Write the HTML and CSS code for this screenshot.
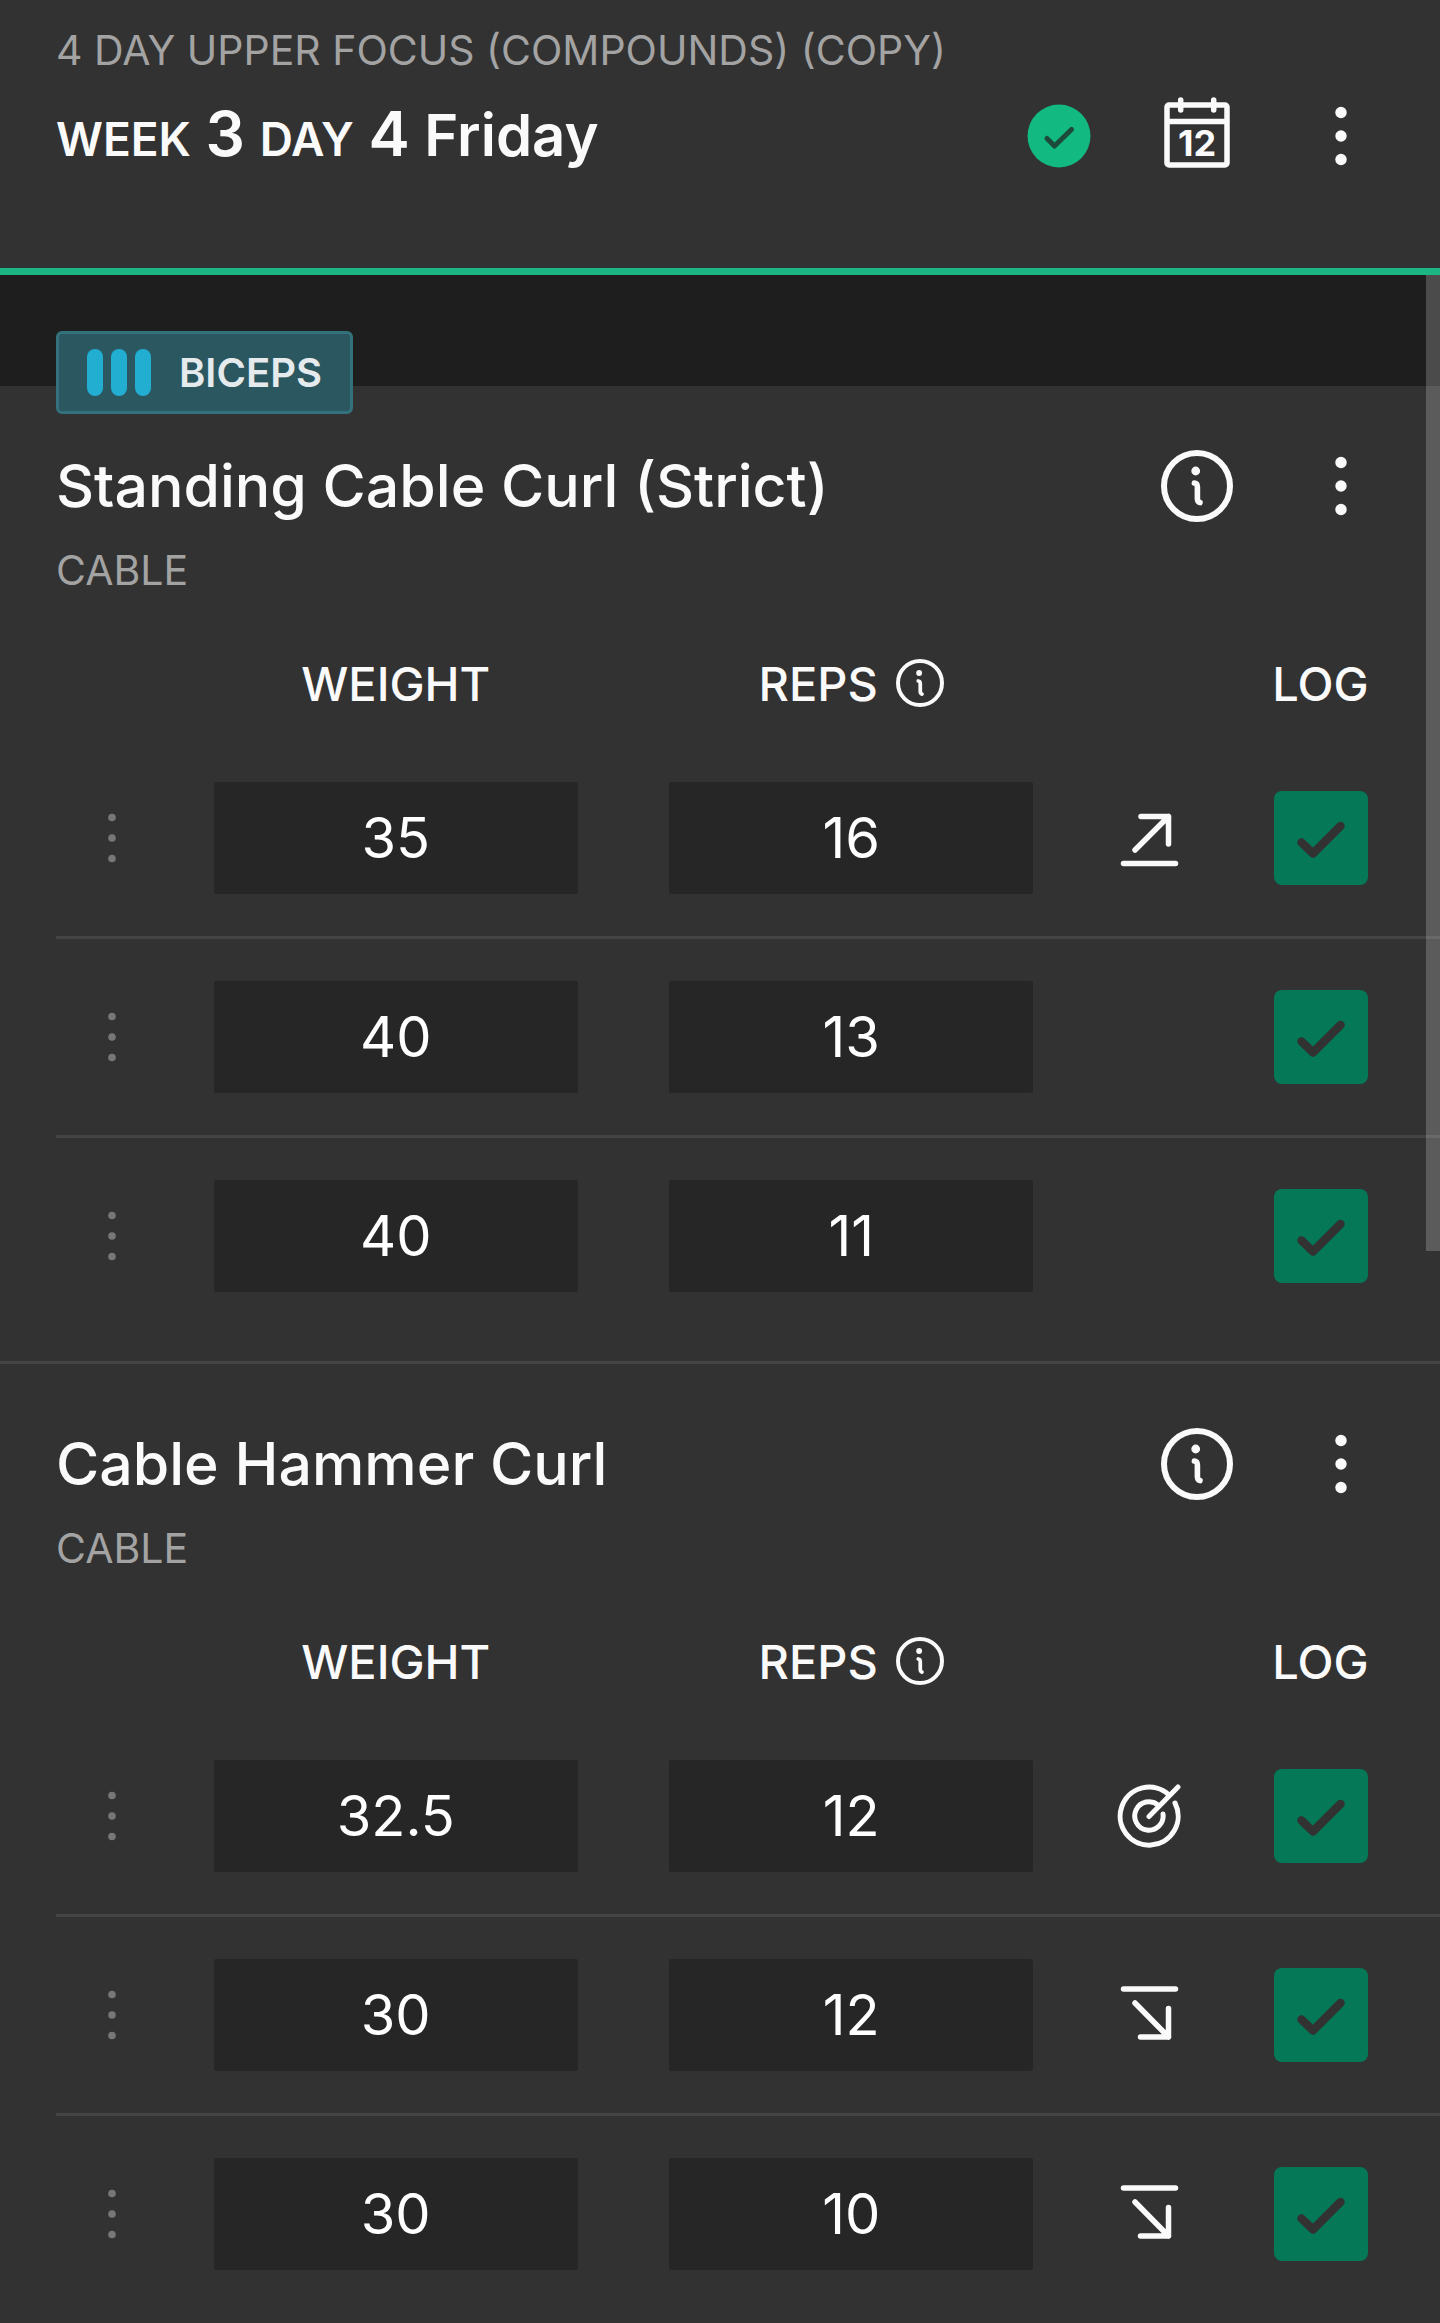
FILE: index.html
```html
<!DOCTYPE html>
<html lang="en">
<head>
  <meta charset="UTF-8">
  <title>Workout - Week 3 Day 4</title>
  <meta name="viewport" content="width=device-width, initial-scale=1.0">
  <link rel="stylesheet" href="styles.css">
</head>
<body>

  <!-- Icons -->
  <svg class="sprite" aria-hidden="true">
    <symbol id="info" viewBox="0 0 72 72">
      <circle cx="36" cy="36" r="33" fill="none" stroke="currentColor" stroke-width="6"/>
      <circle cx="34.7" cy="21" r="4.4" fill="currentColor"/>
      <path d="M33.4 33Q36.4 33.4 36.4 37V48.5Q36.4 52 39 52.6" fill="none" stroke="currentColor" stroke-width="5.6" stroke-linecap="round"/>
    </symbol>
    <symbol id="more" viewBox="0 0 72 72">
      <circle cx="36" cy="12.5" r="5.7" fill="currentColor"/>
      <circle cx="36" cy="36" r="5.7" fill="currentColor"/>
      <circle cx="36" cy="59.5" r="5.7" fill="currentColor"/>
    </symbol>
    <symbol id="grip" viewBox="0 0 64 64">
      <circle cx="32" cy="11.5" r="3.8" fill="currentColor"/>
      <circle cx="32" cy="32" r="3.8" fill="currentColor"/>
      <circle cx="32" cy="52.5" r="3.8" fill="currentColor"/>
    </symbol>
    <symbol id="tick" viewBox="0 0 94 94">
      <path d="M27.5 51.5L39 62.5L66.5 35" fill="none" stroke="currentColor" stroke-width="8.5" stroke-linecap="round" stroke-linejoin="round"/>
    </symbol>
    <symbol id="up" viewBox="0 0 64 64">
      <path d="M24 10.5H51.5V38M51.5 10.5L18 44M6.5 57.500H58.5" fill="none" stroke="currentColor" stroke-width="5.5" stroke-linecap="round" stroke-linejoin="round"/>
    </symbol>
    <symbol id="down" viewBox="0 0 64 64">
      <path d="M23.5 54H51.5V25.5M51.5 54L18 20M6.5 6H58.5" fill="none" stroke="currentColor" stroke-width="5.5" stroke-linecap="round" stroke-linejoin="round"/>
    </symbol>
    <symbol id="target" viewBox="0 0 64 64">
      <path d="M58 19A29 29 0 1 1 52 11M46 30A14.2 14.2 0 1 1 41.5 21.5M32 32.5L61 3" fill="none" stroke="currentColor" stroke-width="5" stroke-linecap="round"/>
    </symbol>
  </svg>

  <header class="header">
    <p class="plan">4 DAY UPPER FOCUS (COMPOUNDS) (COPY)</p>
    <div class="title-row">
      <h1><span class="word">WEEK</span> <span class="num">3</span> <span class="word">DAY</span> <span class="num">4</span> Friday</h1>
      <svg class="done" viewBox="0 0 64 64" role="img" aria-label="Completed">
        <circle cx="32" cy="32" r="31.5" fill="#12b981"/>
        <path d="M20 34.5L27.5 42L44.5 25.5" fill="none" stroke="#1c4a3b" stroke-width="5" stroke-linecap="round" stroke-linejoin="round"/>
      </svg>
      <button class="icon-btn" aria-label="Calendar">
        <svg viewBox="0 0 72 72">
          <rect x="6" y="5" width="60" height="60" rx="2" fill="none" stroke="currentColor" stroke-width="5.5"/>
          <path d="M6 21.5H66" stroke="currentColor" stroke-width="5.5"/>
          <path d="M19.7 0V10M52.700 0V10" stroke="currentColor" stroke-width="5.5" stroke-linecap="round"/>
          <text x="36" y="56" class="cal-day">12</text>
        </svg>
      </button>
      <button class="icon-btn" aria-label="Workout menu"><svg><use href="#more"/></svg></button>
    </div>
  </header>

  <main class="content">

    <section class="exercise">
      <div class="badge"><span class="bars"><i></i><i></i><i></i></span>BICEPS</div>
      <div class="title-row">
        <h2>Standing Cable Curl (Strict)</h2>
        <button class="icon-btn" aria-label="Exercise info"><svg><use href="#info"/></svg></button>
        <button class="icon-btn" aria-label="Exercise menu"><svg><use href="#more"/></svg></button>
      </div>
      <p class="equipment">CABLE</p>
      <table class="sets">
        <thead>
          <tr>
            <th class="col-grip"></th>
            <th>WEIGHT</th>
            <th><span class="reps">REPS <button class="help" aria-label="About reps"><svg><use href="#info"/></svg></button></span></th>
            <th class="col-trend"></th>
            <th class="col-log">LOG</th>
          </tr>
        </thead>
        <tbody>
          <tr>
            <td><button class="grip" aria-label="Set menu"><svg><use href="#grip"/></svg></button></td>
            <td><input class="value" type="text" aria-label="Weight" value="35"></td>
            <td><input class="value" type="text" aria-label="Reps" value="16"></td>
            <td><svg class="trend"><use href="#up"/></svg></td>
            <td class="col-log"><label class="log"><input type="checkbox" aria-label="Log set" checked><svg><use href="#tick"/></svg></label></td>
          </tr>
          <tr>
            <td><button class="grip" aria-label="Set menu"><svg><use href="#grip"/></svg></button></td>
            <td><input class="value" type="text" aria-label="Weight" value="40"></td>
            <td><input class="value" type="text" aria-label="Reps" value="13"></td>
            <td></td>
            <td class="col-log"><label class="log"><input type="checkbox" aria-label="Log set" checked><svg><use href="#tick"/></svg></label></td>
          </tr>
          <tr>
            <td><button class="grip" aria-label="Set menu"><svg><use href="#grip"/></svg></button></td>
            <td><input class="value" type="text" aria-label="Weight" value="40"></td>
            <td><input class="value" type="text" aria-label="Reps" value="11"></td>
            <td></td>
            <td class="col-log"><label class="log"><input type="checkbox" aria-label="Log set" checked><svg><use href="#tick"/></svg></label></td>
          </tr>
        </tbody>
      </table>
    </section>

    <section class="exercise">
      <div class="title-row">
        <h2>Cable Hammer Curl</h2>
        <button class="icon-btn" aria-label="Exercise info"><svg><use href="#info"/></svg></button>
        <button class="icon-btn" aria-label="Exercise menu"><svg><use href="#more"/></svg></button>
      </div>
      <p class="equipment">CABLE</p>
      <table class="sets">
        <thead>
          <tr>
            <th class="col-grip"></th>
            <th>WEIGHT</th>
            <th><span class="reps">REPS <button class="help" aria-label="About reps"><svg><use href="#info"/></svg></button></span></th>
            <th class="col-trend"></th>
            <th class="col-log">LOG</th>
          </tr>
        </thead>
        <tbody>
          <tr>
            <td><button class="grip" aria-label="Set menu"><svg><use href="#grip"/></svg></button></td>
            <td><input class="value" type="text" aria-label="Weight" value="32.5"></td>
            <td><input class="value" type="text" aria-label="Reps" value="12"></td>
            <td><svg class="trend"><use href="#target"/></svg></td>
            <td class="col-log"><label class="log"><input type="checkbox" aria-label="Log set" checked><svg><use href="#tick"/></svg></label></td>
          </tr>
          <tr>
            <td><button class="grip" aria-label="Set menu"><svg><use href="#grip"/></svg></button></td>
            <td><input class="value" type="text" aria-label="Weight" value="30"></td>
            <td><input class="value" type="text" aria-label="Reps" value="12"></td>
            <td><svg class="trend"><use href="#down"/></svg></td>
            <td class="col-log"><label class="log"><input type="checkbox" aria-label="Log set" checked><svg><use href="#tick"/></svg></label></td>
          </tr>
          <tr>
            <td><button class="grip" aria-label="Set menu"><svg><use href="#grip"/></svg></button></td>
            <td><input class="value" type="text" aria-label="Weight" value="30"></td>
            <td><input class="value" type="text" aria-label="Reps" value="10"></td>
            <td><svg class="trend"><use href="#down"/></svg></td>
            <td class="col-log"><label class="log"><input type="checkbox" aria-label="Log set" checked><svg><use href="#tick"/></svg></label></td>
          </tr>
        </tbody>
      </table>
    </section>

  </main>

  <div class="scroll-thumb"></div>

</body>
</html>
```
FILE: styles.css
```css
/* Reset */
* {
  margin: 0;
  padding: 0;
  box-sizing: border-box;
}

body {
  position: relative;
  display: flex;
  flex-direction: column;
  height: 100vh;
  overflow: hidden;
  background: #323232;
  color: #fafafa;
  font-family: Inter, "Open Sans", sans-serif;
}

button {
  background: none;
  border: 0;
  color: inherit;
  font-family: inherit;
  cursor: pointer;
}

svg {
  display: block;
}

.sprite {
  position: absolute;
  width: 0;
  height: 0;
}

/* Header */
.header {
  flex: none;
  padding: 20px 0 94px;
  border-bottom: 7px solid #1bb683;
}

.plan,
.equipment {
  padding-left: 56px;
  color: #a3a3a3;
  font-size: 41px;
  line-height: 60px;
}

.plan {
  margin-bottom: 18px;
}

.title-row {
  display: flex;
  align-items: center;
  gap: 48px;
  height: 76px;
  padding: 0 51px 0 56px;
}

h1,
h2 {
  flex: 1;
  line-height: 76px;
  white-space: nowrap;
}

h1 {
  font-size: 58px;
  font-weight: 600;
}

h1 .word {
  font-size: 46px;
}

h1 .num {
  font-size: 62px;
}

h2 {
  font-size: 59px;
  font-weight: 500;
}

.done {
  width: 64px;
  height: 64px;
  margin: 0 10px;
}

.icon-btn {
  width: 96px;
  height: 76px;
}

.icon-btn svg {
  width: 72px;
  height: 72px;
  margin: auto;
  overflow: visible;
}

.cal-day {
  fill: currentColor;
  font-size: 36px;
  font-weight: 700;
  text-anchor: middle;
}

/* Exercises */
.content {
  flex: 1;
  min-height: 0;
  padding-top: 111px;
  overflow-y: auto;
  scrollbar-width: none;
  background: #1e1e1e;
}

.exercise {
  position: relative;
  padding: 62px 0 27px;
  background: #323232;
  border-bottom: 3px solid #444;
}

.badge {
  position: absolute;
  top: -55px;
  left: 56px;
  display: flex;
  align-items: center;
  gap: 28px;
  height: 83px;
  padding: 0 28px;
  background: #2b5760;
  border: 3px solid #33717d;
  border-radius: 6px;
  color: #e5eaec;
  font-size: 40px;
  font-weight: 600;
}

.bars {
  display: flex;
  gap: 8px;
}

.bars i {
  width: 16px;
  height: 47px;
  background: #22aed1;
  border-radius: 8px;
}

.equipment {
  margin: 16px 0 26px;
}

/* Sets table */
.sets {
  width: calc(100% - 56px);
  margin-left: 56px;
  table-layout: fixed;
  border-spacing: 0;
}

.sets th {
  height: 114px;
  font-size: 47px;
  font-weight: 500;
  text-align: center;
  vertical-align: middle;
}

.sets td {
  padding: 42px 0;
  border-bottom: 3px solid #444;
  text-align: center;
  vertical-align: middle;
}

.sets tr:last-child td {
  border-bottom: 0;
}

.sets .col-grip {
  width: 112px;
}

.sets .col-trend {
  width: 140px;
}

.sets .col-log {
  width: 221px;
  padding-right: 18px;
}

.reps {
  display: flex;
  align-items: center;
  justify-content: center;
  gap: 18px;
}

.help,
.help svg {
  width: 48px;
  height: 48px;
}

.grip {
  display: block;
  margin: auto;
  color: #777;
}

.grip svg,
.trend {
  width: 64px;
  height: 64px;
  margin: auto;
}

.value {
  display: block;
  width: 80%;
  height: 112px;
  margin: auto;
  background: #262626;
  border: 0;
  border-radius: 2px;
  color: #fff;
  font-family: inherit;
  font-size: 56px;
  text-align: center;
}

.log {
  display: grid;
  width: 94px;
  height: 94px;
  margin: auto;
  color: #323232;
}

.log input,
.log svg {
  grid-area: 1 / 1;
  width: 94px;
  height: 94px;
}

.log input {
  appearance: none;
  background: #555;
  border-radius: 8px;
}

.log input:checked {
  background: #047857;
}

.log svg {
  z-index: 1;
  pointer-events: none;
}

/* Overlay scrollbar */
.scroll-thumb {
  position: absolute;
  top: 275px;
  right: 0;
  width: 14px;
  height: 42%;
  background: rgba(255, 255, 255, 0.2);
}
```
